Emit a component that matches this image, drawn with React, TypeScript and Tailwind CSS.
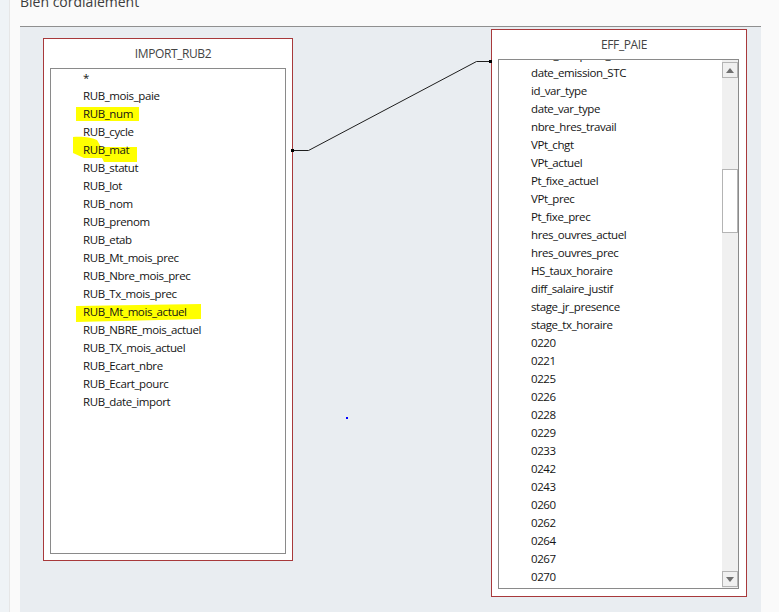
import React from "react";

const importFields = [
  "*",
  "RUB_mois_paie",
  "RUB_num",
  "RUB_cycle",
  "RUB_mat",
  "RUB_statut",
  "RUB_lot",
  "RUB_nom",
  "RUB_prenom",
  "RUB_etab",
  "RUB_Mt_mois_prec",
  "RUB_Nbre_mois_prec",
  "RUB_Tx_mois_prec",
  "RUB_Mt_mois_actuel",
  "RUB_NBRE_mois_actuel",
  "RUB_TX_mois_actuel",
  "RUB_Ecart_nbre",
  "RUB_Ecart_pourc",
  "RUB_date_import",
];

const effFields = [
  "date_reception_STC",
  "date_emission_STC",
  "id_var_type",
  "date_var_type",
  "nbre_hres_travail",
  "VPt_chgt",
  "VPt_actuel",
  "Pt_fixe_actuel",
  "VPt_prec",
  "Pt_fixe_prec",
  "hres_ouvres_actuel",
  "hres_ouvres_prec",
  "HS_taux_horaire",
  "diff_salaire_justif",
  "stage_jr_presence",
  "stage_tx_horaire",
  "0220",
  "0221",
  "0225",
  "0226",
  "0228",
  "0229",
  "0233",
  "0242",
  "0243",
  "0260",
  "0262",
  "0264",
  "0267",
  "0270",
];

const font = { fontFamily: "'Open Sans', 'Noto Sans', sans-serif" };

function Row({ label }: { label: string }) {
  return (
    <div className="h-[18px] leading-[18px] pl-[32px] text-[11.5px] tracking-[-0.4px] text-[#141414] whitespace-nowrap">
      {label}
    </div>
  );
}

function ScrollButton({ up }: { up: boolean }) {
  return (
    <div className="w-[16px] h-[16px] border border-[#b4b4b4] bg-[#f0f0f0] flex items-center justify-center">
      <svg width="8" height="5" viewBox="0 0 8 5">
        {up ? (
          <polygon points="0,5 8,5 4,0" fill="#707070" />
        ) : (
          <polygon points="0,0 8,0 4,5" fill="#707070" />
        )}
      </svg>
    </div>
  );
}

export default function App() {
  return (
    <div
      className="w-[779px] h-[612px] overflow-hidden bg-[#fafafa] flex"
      style={font}
    >
      <div className="w-[10px] h-full bg-[#eff3f6] border-r border-[#e6e6e6]" />
      <div className="w-[10px] h-full" />
      <div className="w-[741px] h-full flex flex-col">
        <div className="h-[26px] overflow-hidden">
          <div className="mt-[-8px] text-[14px] leading-[20px] text-[#3c3c3c] whitespace-nowrap">
            Bien cordialement
          </div>
        </div>
        <div className="h-px bg-[#8f8f8f]" />
        <div className="relative flex-1 bg-[#e9edf1]">
          {/* IMPORT_RUB2 table */}
          <div className="absolute left-[23px] top-[11px] w-[250px] h-[523px] bg-white border border-[#a8393b] flex flex-col">
            <div className="h-[29px] flex items-center justify-center pl-[10px] text-[12px] tracking-[-0.4px] text-[#444]">
              IMPORT_RUB2
            </div>
            <div className="relative mx-[6px] h-[486px] border border-[#8a8a8a] bg-white">
              <svg
                className="absolute left-0 top-0"
                width="234"
                height="484"
                viewBox="0 0 234 484"
              >
                <rect x="25" y="38" width="63" height="14" fill="#ffff00" />
                <path
                  d="M22,68 C32,67 42,69 46,71 L50,78 L86,78 L86,93 L53,93 L51,89 L33,89 L22,84 Z"
                  fill="#ffff00"
                />
                <path d="M25,237 L150,235 L150,250 L25,253 Z" fill="#ffff00" />
              </svg>
              <div className="relative">
                {importFields.map((f) => (
                  <Row key={f} label={f} />
                ))}
              </div>
            </div>
          </div>

          {/* EFF_PAIE table */}
          <div className="absolute left-[471px] top-[2px] w-[256px] h-[568px] bg-white border border-[#a8393b] flex flex-col">
            <div className="h-[29px] flex items-center justify-center pl-[10px] text-[12px] tracking-[-0.4px] text-[#444]">
              EFF_PAIE
            </div>
            <div className="ml-[6px] mr-[7px] h-[530px] border border-[#8a8a8a] bg-white flex overflow-hidden">
              <div className="flex-1 overflow-hidden">
                <div className="mt-[-14px]">
                  {effFields.map((f) => (
                    <Row key={f} label={f} />
                  ))}
                </div>
              </div>
              <div className="w-[16px] bg-[#f0f0f0] flex flex-col pt-[2px] pb-[1px]">
                <ScrollButton up />
                <div className="flex-1">
                  <div className="mt-[91px] h-[64px] w-[16px] bg-white border border-[#b4b4b4]" />
                </div>
                <ScrollButton up={false} />
              </div>
            </div>
          </div>

          {/* relation line */}
          <svg
            className="absolute left-0 top-0 pointer-events-none"
            width="741"
            height="585"
            viewBox="0 0 741 585"
          >
            <polyline
              points="272.5,123.5 288.5,123.5 456.5,34.5 471,34.5"
              fill="none"
              stroke="#1e1e1e"
              strokeWidth="1"
            />
            <rect x="271" y="122" width="3" height="3" fill="#000" />
            <rect x="469" y="33" width="3" height="3" fill="#000" />
            <rect x="326" y="390" width="2" height="2" fill="#0000ff" />
          </svg>
        </div>
      </div>
      <div className="flex-1" />
    </div>
  );
}
